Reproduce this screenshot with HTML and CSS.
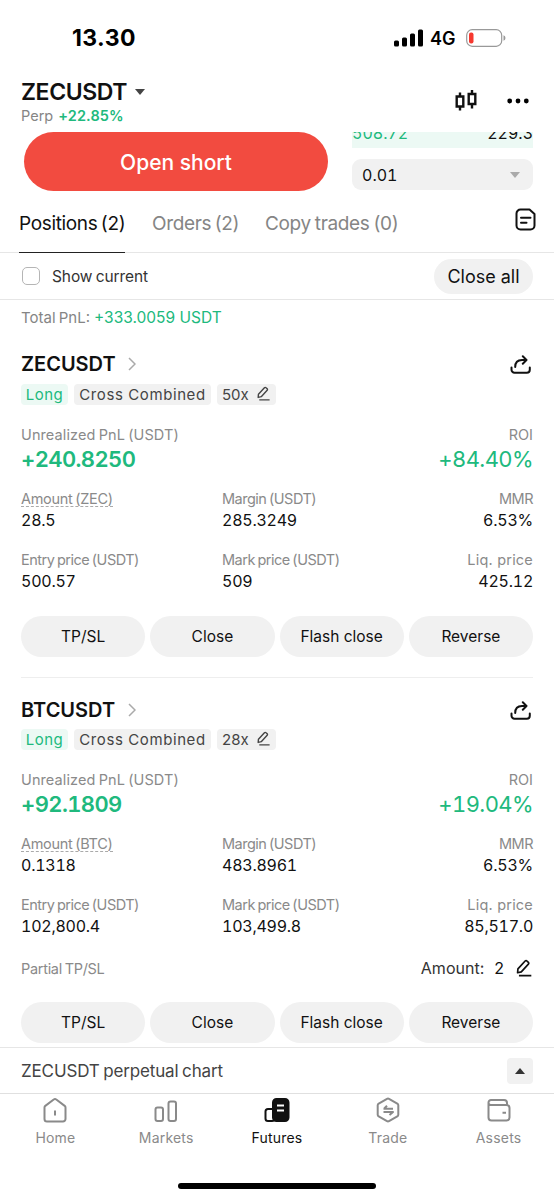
FILE: index.html
```
<!DOCTYPE html>
<html lang="en">
<head>
<meta charset="utf-8">
<title>ZECUSDT Perp</title>
<link rel="stylesheet" href="styles.css">
</head>
<body>
<svg class="defs" width="0" height="0" aria-hidden="true">
  <symbol id="edit" viewBox="0 0 16 16"><path d="M2.600 8.800 9 1.800a1.200 1.200 0 0 1 1.700 0l1.200 1.100a1.200 1.200 0 0 1 0 1.700L5.600 11.400 2.300 12.200ZM3.500 14.800H14.500" /></symbol>
  <symbol id="share" viewBox="0 0 22 20"><path d="M1.500 12.500v2.200a3 3 0 0 0 3 3h12.300a3 3 0 0 0 3-3v-2.200M5.200 12c0-4.400 2.300-7 6.800-7h4M12.800 1.300 16.500 5l-3.700 3.700"/></symbol>
  <symbol id="chev" viewBox="0 0 8 14"><path d="m1 1 6 6-6 6"/></symbol>
</svg>
<header class="status">
  <span class="time">13.30</span>
  <span class="signal">
    <svg width="29" height="18" viewBox="0 0 29 18"><rect x="0" y="11.500" width="5" height="6" rx="1.500"/><rect x="8" y="8.500" width="5" height="9" rx="1.500"/><rect x="16" y="4.500" width="5" height="13" rx="1.500"/><rect x="24" y="0.500" width="5" height="17" rx="1.500"/></svg>
    <span class="net">4G</span>
    <svg class="battery" width="40" height="18" viewBox="0 0 40 18"><rect x=".7" y=".7" width="35" height="16.600" rx="5.500" fill="none" stroke="#999" stroke-width="1.200"/><rect x="3" y="3.500" width="4.500" height="11" rx="2" fill="#f6382f"/><path d="M37.500 6.300q2 .5 2 2.700t-2 2.700z" fill="#999"/></svg>
  </span>
</header>
<section class="pair">
  <div>
    <div class="symbol"><span class="pair-name">ZECUSDT</span><i class="down"></i></div>
    <div class="perp">Perp <b>+22.85%</b></div>
  </div>
  <div class="pair-icons">
    <svg width="22" height="23" viewBox="0 0 22 23" fill="none" stroke="#111" stroke-width="2.400"><path d="M1.700 7.500h6.600v10H1.700zM5 3.500v4M5 17.500v4M13.700 5h6.600v10h-6.600zM17 1v4M17 15v4.500"/></svg>
    <svg width="23" height="6" viewBox="0 0 23 6"><circle cx="2.700" cy="3" r="2.400"/><circle cx="11" cy="3" r="2.400"/><circle cx="19.300" cy="3" r="2.400"/></svg>
  </div>
</section>
<section class="order">
  <button class="short">Open short</button>
  <div class="book">
    <div class="book-row"><span class="green">508.72</span><span>229.3</span></div>
    <div class="select"><span>0.01</span><i class="down pale"></i></div>
  </div>
</section>
<nav class="tabs">
  <span class="tab active">Positions (2)</span><span class="tab orders">Orders (2)</span><span class="tab copy">Copy trades (0)</span>
  <svg width="21" height="23" viewBox="0 0 21 23" fill="none" stroke="#111" stroke-width="2" stroke-linejoin="round" stroke-linecap="round"><path d="M5.500 1.500h9L19.500 6v11.500a4 4 0 0 1-4 4h-10a4 4 0 0 1-4-4v-12a4 4 0 0 1 4-4zM6 9.800h9.500M6 14.800h5.500"/></svg>
</nav>
<section class="filter"><i class="check"></i><span class="show">Show current</span><button class="all">Close all</button></section>
<main>
  <p class="total"><span class="total-label">Total PnL:</span><span class="green">+333.0059 USDT</span></p>
  <article class="position">
    <div class="head"><h2>ZECUSDT</h2><svg class="chev" width="8" height="14"><use href="#chev"/></svg><svg class="share" width="22" height="20"><use href="#share"/></svg></div>
    <div class="tags"><span class="tag long">Long</span><span class="tag cross">Cross Combined</span><span class="tag lev">50x<svg class="edit" width="15" height="15"><use href="#edit"/></svg></span></div>
    <div class="line"><span class="label unreal">Unrealized PnL (USDT)</span><span class="label">ROI</span></div>
    <div class="line big"><strong>+240.8250</strong><span class="roi">+84.40%</span></div>
    <div class="stats">
      <div><span class="label dashed">Amount (ZEC)</span><span class="value">28.5</span></div>
      <div><span class="label">Margin (USDT)</span><span class="value">285.3249</span></div>
      <div><span class="label">MMR</span><span class="value">6.53%</span></div>
      <div><span class="label">Entry price (USDT)</span><span class="value">500.57</span></div>
      <div><span class="label">Mark price (USDT)</span><span class="value">509</span></div>
      <div><span class="label liq">Liq. price</span><span class="value">425.12</span></div>
    </div>
    <div class="actions"><button>TP/SL</button><button>Close</button><button class="flash">Flash close</button><button>Reverse</button></div>
  </article>
  <article class="position second">
    <div class="head"><h2>BTCUSDT</h2><svg class="chev" width="8" height="14"><use href="#chev"/></svg><svg class="share" width="22" height="20"><use href="#share"/></svg></div>
    <div class="tags"><span class="tag long">Long</span><span class="tag cross">Cross Combined</span><span class="tag lev">28x<svg class="edit" width="15" height="15"><use href="#edit"/></svg></span></div>
    <div class="line"><span class="label unreal">Unrealized PnL (USDT)</span><span class="label">ROI</span></div>
    <div class="line big"><strong>+92.1809</strong><span class="roi">+19.04%</span></div>
    <div class="stats">
      <div><span class="label dashed">Amount (BTC)</span><span class="value">0.1318</span></div>
      <div><span class="label">Margin (USDT)</span><span class="value">483.8961</span></div>
      <div><span class="label">MMR</span><span class="value">6.53%</span></div>
      <div><span class="label">Entry price (USDT)</span><span class="value">102,800.4</span></div>
      <div><span class="label">Mark price (USDT)</span><span class="value">103,499.8</span></div>
      <div><span class="label liq">Liq. price</span><span class="value">85,517.0</span></div>
    </div>
    <div class="partial"><span class="label">Partial TP/SL</span><span class="amount">Amount:</span><span class="count">2</span><svg class="edit" width="18" height="18"><use href="#edit"/></svg></div>
    <div class="actions"><button>TP/SL</button><button>Close</button><button class="flash">Flash close</button><button>Reverse</button></div>
  </article>
</main>
<section class="chart"><span>ZECUSDT perpetual chart</span><span class="expand"><i class="up"></i></span></section>
<nav class="bottom">
  <a><svg width="26" height="26" viewBox="0 0 26 26"><path d="M11.700 2.500a2 2 0 0 1 2.600 0l8.400 6.400a2 2 0 0 1 .8 1.600v11.500a2.500 2.500 0 0 1-2.500 2.500H5A2.500 2.500 0 0 1 2.500 22V10.500a2 2 0 0 1 .8-1.600zM13 13.500v5"/></svg>Home</a>
  <a><svg width="26" height="26" viewBox="0 0 26 26"><rect x="2.500" y="10.500" width="7.500" height="13.500" rx="2"/><rect x="15.500" y="4.500" width="7.500" height="19.500" rx="2"/></svg>Markets</a>
  <a class="on"><svg width="26" height="26" viewBox="0 0 26 26"><rect x="1.500" y="12" width="9" height="12" rx="2.500"/><rect class="solid" x="9" y="2" width="15.500" height="22" rx="3.500"/><path class="cut" d="M13 8.500h7M13 13.500h7"/></svg>Futures</a>
  <a><svg width="26" height="26" viewBox="0 0 26 26"><path d="M12 1.800a2 2 0 0 1 2 0l8.300 4.800a2 2 0 0 1 1 1.700v9.400a2 2 0 0 1-1 1.700L14 24.200a2 2 0 0 1-2 0l-8.300-4.800a2 2 0 0 1-1-1.700V8.300a2 2 0 0 1 1-1.700zM8.500 11.800H18M12 8.800l-3 3M8.500 15H18l-3.500 3"/></svg>Trade</a>
  <a><svg width="26" height="26" viewBox="0 0 26 26"><path d="M2.500 5.500v15a3 3 0 0 0 3 3h15a3 3 0 0 0 3-3V11a3 3 0 0 0-3-3H5a2.500 2.500 0 0 1-2.500-2.500A2.500 2.500 0 0 1 5 3h13a3 3 0 0 1 3 3v2M16.500 15.800H20"/></svg>Assets</a>
</nav>
<div class="home-bar"></div>
</body>
</html>
```
FILE: styles.css
```
* { box-sizing: border-box; }
body { margin: 0; width: 554px; height: 1200px; overflow: hidden; background: #fff; color: #111; font-family: Inter, "Liberation Sans", sans-serif; display: flex; flex-direction: column; white-space: nowrap; }
.defs { position: absolute; }
button { border: 0; padding: 0; background: #f1f1f1; color: #111; font: inherit; }
i { display: block; }
.green { color: #20b97d; }
.status { height: 76px; padding: 0 48px 0 72px; display: flex; justify-content: space-between; align-items: center; color: #000; flex: none; }
.time { font-size: 23px; font-weight: 700; letter-spacing: .4px; }
.signal { display: flex; align-items: center; }
.net { font-size: 18px; font-weight: 600; margin: 0 9px 0 7px; width: 27px; }
.pair { height: 55px; flex: none; padding: 0 24px 0 21px; display: flex; justify-content: space-between; }
.symbol { display: flex; align-items: center; height: 32px; font-size: 23px; font-weight: 600; }
.pair-name { width: 106px; letter-spacing: -.4px; }
.down { border: 5.500px solid transparent; border-top: 6px solid #444; border-bottom: 0; margin-left: 8px; }
.perp { height: 16px; line-height: 16px; font-size: 14.500px; color: #858585; }
.perp b { color: #20b97d; font-weight: 600; margin-left: 1px; letter-spacing: .1px; }
.pair-icons { display: flex; align-items: center; gap: 30px; height: 49px; }
.order { height: 61px; flex: none; padding: 1px 21px 0 24px; display: flex; justify-content: space-between; }
.short { width: 304px; height: 59px; padding-top: 2px; border-radius: 30px; background: #f24b40; color: #fff; font-size: 21px; font-weight: 500; }
.book { width: 181px; }
.book-row { height: 16px; overflow: hidden; background: #ecf9f4; display: flex; justify-content: space-between; align-items: flex-start; line-height: 22px; font-size: 16px; font-variant-numeric: tabular-nums; }
.book-row span { margin-top: -10px; }
.select { height: 31px; margin-top: 11px; border-radius: 9px; background: #f1f1f1; display: flex; justify-content: space-between; align-items: center; padding: 0 13px 0 10px; font-size: 16px; font-variant-numeric: tabular-nums; }
.pale { border-top-color: #aaa; }
.tabs { height: 61px; flex: none; border-bottom: 1px solid #e6e6e6; display: flex; align-items: stretch; padding: 0 18px 0 19px; font-size: 19px; letter-spacing: -.35px; word-spacing: -1.500px; color: #858585; line-height: 64px; }
.tab { width: 106px; height: 61px; }
.active { border-bottom: 1.500px solid #222; color: #111; }
.orders { margin-left: 27px; width: 86px; }
.copy { margin-left: 27px; width: 134px; word-spacing: -1px; }
.tabs svg { margin: 16px 0 0 auto; }
.filter { height: 47px; flex: none; border-bottom: 1px solid #e6e6e6; display: flex; align-items: center; padding: 0 21px 0 22px; }
.check { width: 18px; height: 18px; border: 1.500px solid #b5b5b5; border-radius: 5px; margin-right: 12px; }
.show { font-size: 15.500px; color: #333; letter-spacing: -.1px; word-spacing: -1px; }
.all { width: 99px; height: 35px; padding-top: 1px; border-radius: 18px; margin-left: auto; font-size: 18px; }
main { height: 747px; flex: none; padding: 0 21px; }
.total { margin: 0; height: 35px; line-height: 35px; font-size: 15px; color: #858585; display: flex; }
.total-label { width: 73px; word-spacing: -1px; }
.total .green { font-size: 15.500px; }
.position { height: 342px; padding-top: 11px; }
.second { border-top: 1px solid #eee; padding-top: 14px; height: 370px; }
.head { height: 36px; display: flex; align-items: center; }
.position:not(.second) .tags { margin-top: 2px; }
h2 { margin: 0; width: 95px; font-size: 20px; font-weight: 600; }
.chev { margin-left: 12px; }
svg use { fill: none; stroke: currentColor; }
.chev use { stroke: #aaa; stroke-width: 1.500px; }
.share { margin: 2px 1px 0 auto; stroke-width: 2px; stroke-linecap: round; stroke-linejoin: round; }
.tags { height: 21px; display: flex; gap: 6px; margin-top: 1px; }
.tag { height: 21px; line-height: 21px; border-radius: 4px; background: #f1f1f1; color: #444; font-size: 15px; text-align: center; }
.long { width: 47px; color: #20b97d; background: #ecf9f4; letter-spacing: .5px; }
.cross { width: 137px; letter-spacing: .6px; }
.lev { width: 59px; display: flex; align-items: center; padding-left: 5px; gap: 7px; }
.edit { stroke-width: 1.500px; stroke-linejoin: round; }
.lev .edit { margin-bottom: 2px; }
.line { height: 20px; margin-top: 20px; line-height: 20px; display: flex; justify-content: space-between; }
.label { color: #8a8a8a; font-size: 14.500px; }
.unreal { letter-spacing: .1px; word-spacing: -1px; }
.line.big { height: 29px; margin-top: 0; line-height: 29px; color: #20b97d; font-size: 22px; font-variant-numeric: tabular-nums; letter-spacing: -.6px; }
.big strong { font-weight: 600; }
.stats { margin-top: 15px; display: grid; grid-template-columns: 201px 1fr auto; row-gap: 17px; }
.stats div { display: flex; flex-direction: column; align-items: flex-start; height: 44px; }
.stats div:nth-child(3n) { align-items: flex-end; }
.stats .label { line-height: 20px; height: 21px; letter-spacing: -.5px; word-spacing: -1px; }
.stats .dashed { height: 18px; margin-bottom: 3px; border-bottom: 1px dashed #aaa; letter-spacing: -.3px; }
.stats .liq { letter-spacing: .2px; word-spacing: 0; }
.value { font-size: 16px; line-height: 21px; font-variant-numeric: tabular-nums; letter-spacing: -.25px; }
.actions { display: grid; grid-template-columns: repeat(4, 1fr); gap: 5px; margin-top: 22px; }
.actions button { height: 41px; border-radius: 21px; font-size: 15.500px; }
.partial { height: 22px; margin-top: 18px; display: flex; align-items: center; font-size: 16px; }
.partial .label { letter-spacing: -.3px; word-spacing: -1px; }
.amount { margin-left: auto; color: #333; }
.count { margin: 0 11px 0 10px; }
.partial + .actions { margin-top: 23px; }
.chart { height: 47px; flex: none; background: #fff; border-top: 1px solid #e6e6e6; border-bottom: 1px solid #e0e0e0; padding: 0 21px; display: flex; align-items: center; justify-content: space-between; font-size: 17px; letter-spacing: -.15px; word-spacing: -1px; color: #444; }
.expand { width: 26px; height: 26px; border-radius: 4px; background: #f1f1f1; display: grid; place-items: center; }
.up { border: 5px solid transparent; border-bottom: 6px solid #333; border-top: 0; }
.bottom { height: 88px; flex: none; display: grid; grid-template-columns: repeat(5, 1fr); padding-top: 3px; color: #8a8a8a; font-size: 14px; letter-spacing: .2px; }
.bottom a { display: flex; flex-direction: column; align-items: center; gap: 6px; line-height: 18px; }
.bottom svg { fill: none; stroke: currentColor; stroke-width: 2px; stroke-linejoin: round; }
.bottom .on { color: #111; }
.bottom .solid { fill: #111; }
.bottom .cut { stroke: #fff; }
.home-bar { width: 198px; height: 6px; border-radius: 3px; background: #000; margin: 1px auto 0; flex: none; }
```
